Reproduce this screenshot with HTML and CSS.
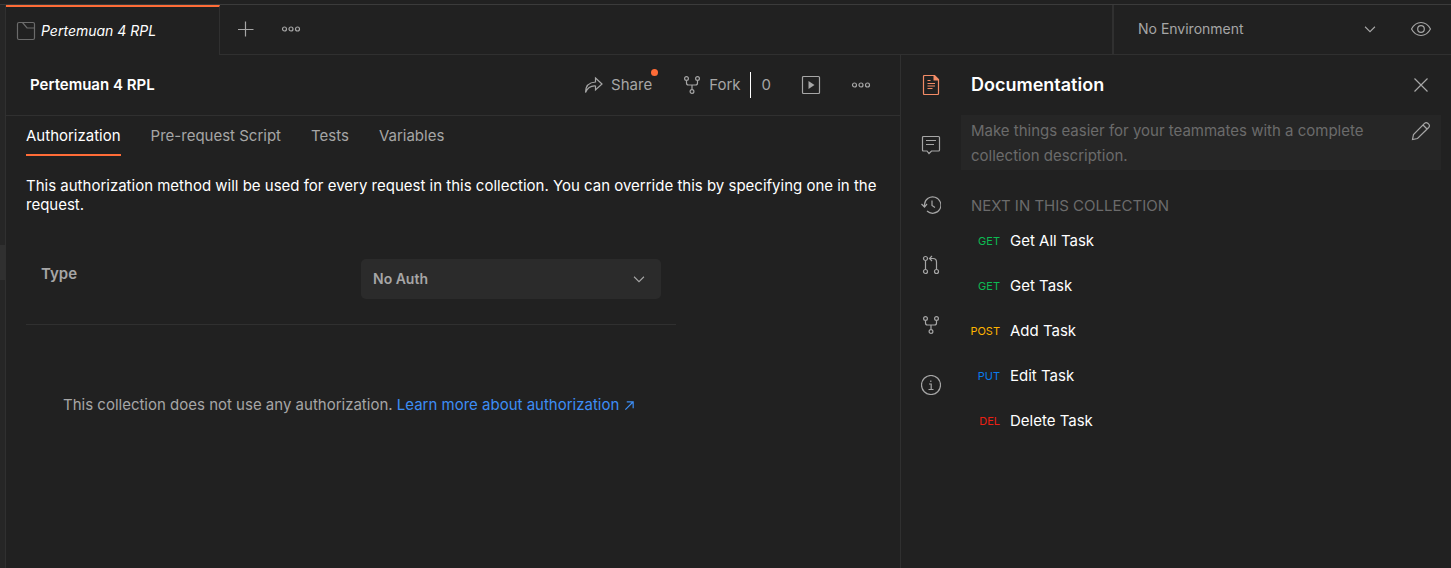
FILE: index.html
```html
<!DOCTYPE html>
<html lang="en">
<head>
<meta charset="utf-8">
<title>Pertemuan 4 RPL</title>
<link rel="stylesheet" href="styles.css">
</head>
<body>
<svg class="defs" aria-hidden="true">
  <symbol id="fork" viewBox="0 0 20 20"><circle cx="4.500" cy="3.500" r="1.900"/><circle cx="15.500" cy="3.500" r="1.900"/><circle cx="10" cy="16.500" r="1.900"/><path d="M4.500 5.500v2.500q0 2 2 2h7q2 0 2-2V5.500M10 10v4.500"/></symbol>
  <symbol id="dots" viewBox="0 0 20 20"><circle cx="3.500" cy="10" r="2"/><circle cx="10" cy="10" r="2"/><circle cx="16.500" cy="10" r="2"/></symbol>
  <symbol id="chevron" viewBox="0 0 20 20"><path d="M4.500 7.500l5.500 5.500 5.500-5.500"/></symbol>
</svg>
<div class="app">
  <aside class="rail"><span class="rail-handle"></span></aside>
  <div class="workspace">
    <header class="topbar">
      <div class="tab">
        <svg class="icon faint" viewBox="0 0 20 20"><path d="M3 1.500h14q1.500 0 1.500 1.500v14q0 1.500-1.500 1.500H3q-1.500 0-1.500-1.500V3q0-1.500 1.500-1.500zM6.500 1.500L11 7h7.500"/></svg>
        <span>Pertemuan 4 RPL</span>
      </div>
      <div class="strip">
        <button class="icon-btn" aria-label="New tab"><svg class="icon" viewBox="0 0 20 20"><path d="M9.500 2.500v15M2 10.500h15.500"/></svg></button>
        <button class="icon-btn" aria-label="Tab options"><svg class="icon"><use href="#dots"/></svg></button>
      </div>
      <div class="environment">
        <div class="select-wrap env-select">
          <select aria-label="Environment"><option>No Environment</option></select>
          <svg class="icon"><use href="#chevron"/></svg>
        </div>
        <button class="icon-btn" aria-label="View environment"><svg class="icon" viewBox="0 0 20 20"><path d="M.5 10q3.500-6.500 9.500-6.500t9.500 6.500q-3.500 6.500-9.500 6.500T.5 10z"/><circle cx="10" cy="10" r="3.300"/></svg></button>
      </div>
    </header>
    <div class="content">
      <main class="collection">
        <div class="titlebar">
          <h1>Pertemuan 4 RPL</h1>
          <div class="actions">
            <button class="action share"><svg class="icon" viewBox="0 0 20 20"><path d="M11.500 3l6.500 6-6.500 6v-4Q4.500 10.500 1.500 17.500 1.500 7.500 11.500 7z"/></svg>Share<span class="badge"></span></button>
            <button class="action fork"><svg class="icon"><use href="#fork"/></svg>Fork</button>
            <span class="fork-count">0</span>
            <button class="icon-btn run" aria-label="Run collection"><svg class="icon" viewBox="0 0 20 20"><rect x="1.500" y="1.500" width="17" height="17" rx="1"/><path class="solid" d="M7.500 6l6 4-6 4z"/></svg></button>
            <button class="icon-btn more" aria-label="More actions"><svg class="icon"><use href="#dots"/></svg></button>
          </div>
        </div>
        <nav class="tabs">
          <a class="active" href="#authorization">Authorization</a>
          <a href="#scripts">Pre-request Script</a>
          <a href="#tests">Tests</a>
          <a href="#variables">Variables</a>
        </nav>
        <section class="auth" id="authorization">
          <p>This authorization method will be used for every request in this collection. You can override this by specifying one in the request.</p>
          <div class="type-row">
            <label for="auth-type">Type</label>
            <div class="select-wrap auth-select">
              <select id="auth-type"><option>No Auth</option></select>
              <svg class="icon"><use href="#chevron"/></svg>
            </div>
          </div>
          <p class="note">This collection does not use any authorization. <a href="#learn">Learn more about authorization <svg class="arrow" viewBox="0 0 12 12"><path d="M1.500 10.500l8-8M3 2h7v7"/></svg></a></p>
        </section>
      </main>
      <aside class="panel">
        <nav class="tools">
          <button class="icon-btn selected" aria-label="Documentation"><svg class="icon" viewBox="0 0 20 20"><path d="M3.500.5h10l4 4v14q0 1-1 1h-13q-1 0-1-1v-17q0-1 1-1z"/><path class="solid" d="M12.500.5h1l4 4v1h-5z"/><path d="M6.500 5.500h3M6.500 8.500h7.500M6.500 11h7.500M6.500 13.500h5"/></svg></button>
          <button class="icon-btn" aria-label="Comments"><svg class="icon" viewBox="0 0 20 20"><path d="M2.500 1.500h15q1 0 1 1V15q0 1-1 1h-7L8 18.500 6 16H2.500q-1 0-1-1V2.500q0-1 1-1zM5 5.500h10M5 9.500h8"/></svg></button>
          <button class="icon-btn" aria-label="Changelog"><svg class="icon" viewBox="0 0 20 20"><path d="M3.500 11.500v-2A8.200 8.200 0 1 1 6 16M.5 9l3 3 2.500-3M11 5.500V10.500l3 2"/></svg></button>
          <button class="icon-btn" aria-label="Pull requests"><svg class="icon" viewBox="0 0 20 20"><circle cx="4.500" cy="3.500" r="2"/><circle cx="4.500" cy="16.500" r="2"/><circle cx="15.500" cy="16.500" r="2"/><path d="M4.500 5.500v9M15.500 14.500V7q0-3.500-3.500-3.500H8.500M11 1L8.500 3.500 11 6"/></svg></button>
          <button class="icon-btn" aria-label="Forks"><svg class="icon"><use href="#fork"/></svg></button>
          <button class="icon-btn" aria-label="Information"><svg class="icon" viewBox="0 0 20 20"><circle cx="10" cy="10" r="9.500"/><path d="M8 9h2.200v5M7.500 14.500h5M9.800 5.500v1.500"/></svg></button>
        </nav>
        <section class="docs">
          <div class="docs-head">
            <h2>Documentation</h2>
            <button class="icon-btn" aria-label="Close"><svg class="icon" viewBox="0 0 20 20"><path d="M3.500 3.500l13 13M16.500 3.500l-13 13"/></svg></button>
          </div>
          <div class="description">
            <p>Make things easier for your teammates with a complete collection description.</p>
            <button class="icon-btn" aria-label="Edit description"><svg class="icon" viewBox="0 0 20 20"><path d="M1.500 18.500l1-5L13.500 2.300q1.500-1.500 3.300 0l.9.9q1.500 1.500 0 3.300L6.500 17.500zM12 4l4 4"/></svg></button>
          </div>
          <h3>NEXT IN THIS COLLECTION</h3>
          <ul class="requests">
            <li><span class="method get">GET</span><a href="#get-all">Get All Task</a></li>
            <li><span class="method get">GET</span><a href="#get">Get Task</a></li>
            <li><span class="method post">POST</span><a href="#add">Add Task</a></li>
            <li><span class="method put">PUT</span><a href="#edit">Edit Task</a></li>
            <li><span class="method del">DEL</span><a href="#delete">Delete Task</a></li>
          </ul>
        </section>
      </aside>
    </div>
  </div>
</div>
</body>
</html>
```
FILE: styles.css
```css
* { box-sizing: border-box; }
body {
  margin: 0;
  background: #212121;
  color: #fff;
  font: 15px/20px Inter, "Liberation Sans", sans-serif;
}
h1, h2, h3, p, ul { margin: 0; padding: 0; font-weight: 400; }
ul { list-style: none; }
a { color: inherit; text-decoration: none; }
button, select {
  margin: 0;
  padding: 0;
  border: 0;
  background: none;
  color: inherit;
  font: inherit;
}
.defs { position: absolute; width: 0; height: 0; }
.icon {
  display: block;
  flex: none;
  width: 20px;
  height: 20px;
  fill: none;
  stroke: currentColor;
  stroke-width: 1.2;
}
.solid { fill: currentColor; stroke: none; }
.faint { color: #6b6b6b; }
.icon-btn { flex: none; color: #a6a6a6; }

.app {
  display: flex;
  min-height: 100vh;
  padding-top: 4px;
}
.rail {
  flex: none;
  width: 6px;
  padding-top: 240px;
  border-top: 1px solid #3b3b3b;
  border-right: 1px solid #303030;
  background: #262626;
}
.rail-handle { display: block; height: 35px; background: #303030; }
.workspace {
  display: flex;
  flex: 1;
  flex-direction: column;
  min-width: 0;
  border-top: 1px solid #3b3b3b;
}

.topbar { display: flex; height: 50px; }
.tab {
  display: flex;
  align-items: center;
  gap: 5px;
  width: 214px;
  padding-left: 10px;
  border-top: 2px solid #ff6c37;
  border-right: 1px solid #303030;
  font-size: 14px;
  font-style: italic;
}
.strip {
  display: flex;
  flex: 1;
  align-items: center;
  gap: 25px;
  padding: 0 0 2px 16px;
  border-bottom: 1px solid #303030;
}
.environment {
  display: flex;
  align-items: center;
  gap: 32px;
  width: 339px;
  padding: 0 20px 2px 24px;
  border-bottom: 1px solid #303030;
  border-left: 2px solid #303030;
}
.select-wrap { display: grid; align-items: center; }
.select-wrap > * { grid-area: 1 / 1; }
.select-wrap select {
  width: 100%;
  height: 100%;
  appearance: none;
  font-size: 14px;
}
.select-wrap .icon { width: 18px; justify-self: end; pointer-events: none; }
.env-select { flex: 1; color: #a6a6a6; }

.content { display: flex; flex: 1; }
.collection { flex: 1; min-width: 0; }
.titlebar {
  display: flex;
  align-items: center;
  justify-content: space-between;
  height: 61px;
  padding: 0 29px 0 24px;
  border-bottom: 1px solid #303030;
}
h1 { font-size: 15px; font-weight: 600; }
.actions { display: flex; align-items: center; color: #a6a6a6; }
.action { display: flex; align-items: center; gap: 7px; }
.share { position: relative; }
.badge {
  position: absolute;
  top: -6px;
  right: -6px;
  width: 7px;
  height: 7px;
  border-radius: 50%;
  background: #ff6c37;
}
.fork { margin-left: 30px; }
.fork-count {
  margin-left: 9px;
  padding: 3px 0 3px 11px;
  border-left: 1px solid #fff;
}
.run, .more { margin-left: 30px; }
.tabs {
  display: flex;
  gap: 30px;
  padding: 0 20px;
  color: #a6a6a6;
}
.tabs a { padding: 10px 0 8px; border-bottom: 2px solid transparent; }
.tabs .active { border-color: #ff6c37; color: #fff; }
.auth { padding: 20px 20px 0; }
.auth p { line-height: 19px; }
.type-row {
  display: flex;
  width: 650px;
  max-width: 100%;
  margin-top: 45px;
  padding-bottom: 25px;
  border-bottom: 1px solid #303030;
}
.type-row label {
  width: 335px;
  padding: 5px 15px;
  color: #a6a6a6;
  font-weight: 600;
}
.auth-select {
  width: 300px;
  height: 40px;
  padding: 0 13px 0 12px;
  border-radius: 5px;
  background: #2b2b2b;
  color: #a6a6a6;
}
.auth-select select { font-weight: 600; }
.auth .note {
  padding: 70px 0 0 37px;
  color: #a6a6a6;
}
.note a { color: #3d8ef5; }
.arrow { width: 11px; height: 11px; fill: none; stroke: currentColor; stroke-width: 1.3; vertical-align: -1px; }

.panel {
  display: flex;
  width: 551px;
  border-left: 1px solid #303030;
}
.tools {
  display: flex;
  flex-direction: column;
  gap: 40px;
  padding: 20px;
}
.selected { color: #f28b66; }
.docs { flex: 1; padding-right: 10px; }
.docs-head {
  display: flex;
  align-items: center;
  justify-content: space-between;
  height: 60px;
  padding: 0 10px;
}
h2 { font-size: 18px; font-weight: 600; }
.description {
  display: flex;
  align-items: flex-start;
  justify-content: space-between;
  gap: 20px;
  padding: 3px 10px 2px;
  background: #262626;
  color: #6b6b6b;
  line-height: 25px;
}
.description .icon-btn { padding-top: 3px; }
h3 { padding: 26px 10px 2px; color: #6b6b6b; font-size: 15px; }
.requests li {
  display: flex;
  align-items: center;
  gap: 10px;
  height: 45px;
}
.method { width: 39px; font-size: 11px; text-align: right; }
.get { color: #0cbb52; }
.post { color: #ffb400; }
.put { color: #097bed; }
.del { color: #eb2013; }
```
